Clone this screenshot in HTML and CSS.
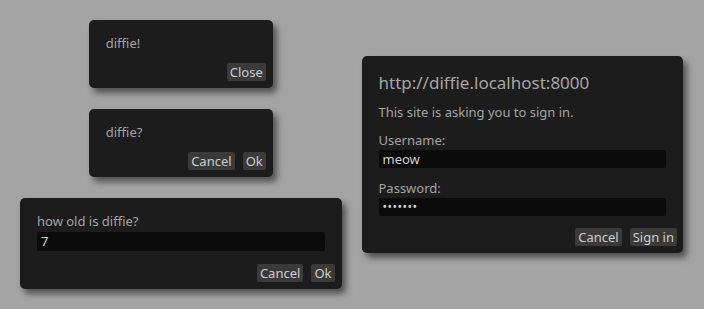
FILE: index.html
```html
<!DOCTYPE html>
<html>
<head>
<meta charset="UTF-8" />
<title>diffie dialogs</title>
<link rel="stylesheet" href="styles.css">
</head>
<body>
<div class="column">
	<div class="dialog small">
		<div class="message">diffie!</div>
		<div class="buttons">
			<span class="button">Close</span>
		</div>
	</div>
	<div class="dialog small">
		<div class="message">diffie?</div>
		<div class="buttons">
			<span class="button">Cancel</span>
			<span class="button">Ok</span>
		</div>
	</div>
	<div class="dialog wide">
		<div class="label">how old is diffie?</div>
		<div class="field">7</div>
		<div class="buttons">
			<span class="button">Cancel</span>
			<span class="button">Ok</span>
		</div>
	</div>
</div>
<div class="column">
	<div class="dialog wide auth">
		<div class="title">http://diffie.localhost:8000</div>
		<div class="desc">This site is asking you to sign in.</div>
		<div class="label">Username:</div>
		<div class="field">meow</div>
		<div class="label">Password:</div>
		<div class="field secret">&bull;&bull;&bull;&bull;&bull;&bull;&bull;</div>
		<div class="buttons">
			<span class="button">Cancel</span>
			<span class="button">Sign in</span>
		</div>
	</div>
</div>
</body>
</html>
```

FILE: styles.css
```css
html, body {
margin:0;
height:100%;
}
body {
background:#a4a4a4;
font-family:"Noto Sans", "DejaVu Sans", sans-serif;
font-size:13px;
color:#a3a3a3;
display:flex;
align-items:center;
gap:20px;
padding:0 21px 0 20px;
box-sizing:border-box;
}
.column {
flex:1;
display:flex;
flex-direction:column;
align-items:center;
gap:21px;
}
.dialog {
background:#1c1c1c;
border-radius:5px;
box-shadow:4px 5px 6px rgba(0,0,0,0.5);
padding:15px 17px 7px;
box-sizing:border-box;
}
.dialog.small {
width:184px;
}
.dialog.wide {
width:100%;
}
.message {
line-height:17px;
margin-bottom:11px;
}
.label {
line-height:17px;
}
.field {
background:#0b0b0b;
color:#cfcfcf;
border-radius:2px;
height:19px;
line-height:19px;
padding:0 4px;
margin-top:2px;
}
.buttons {
display:flex;
justify-content:flex-end;
gap:8px;
margin-right:-10px;
margin-top:13px;
}
.message + .buttons {
margin-top:0;
}
.button {
display:block;
background:#3a3a3a;
color:#cdcdcd;
border-radius:2px;
height:18px;
line-height:18px;
padding:0 3px;
}
.auth .title {
font-size:17px;
line-height:24px;
color:#a6a6a6;
}
.auth .desc {
line-height:17px;
margin-top:9px;
}
.auth .desc + .label {
margin-top:11px;
}
.auth .field {
height:18px;
line-height:18px;
margin-top:1px;
}
.auth .field + .label {
margin-top:12px;
}
.auth .buttons {
margin-top:12px;
margin-right:-11px;
}
.secret {
font-size:12px;
letter-spacing:0.5px;
}
```
